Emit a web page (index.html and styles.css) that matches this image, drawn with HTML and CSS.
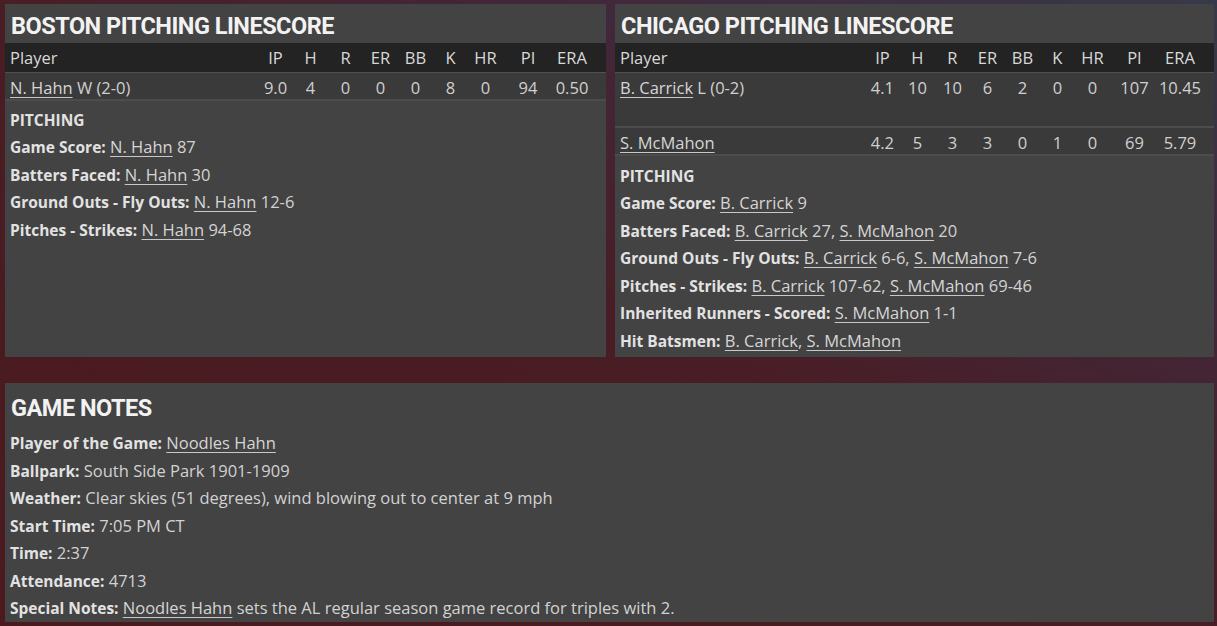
FILE: index.html
```html
<!DOCTYPE html>
<html>
<head>
<meta charset="utf-8">
<link rel="stylesheet" href="styles.css">
</head>
<body>
<div class="page">
  <div class="top-row">
    <section class="panel">
      <h2 class="panel-title">BOSTON PITCHING LINESCORE</h2>
      <table class="linescore">
        <thead>
          <tr><th class="player">Player</th><th>IP</th><th>H</th><th>R</th><th>ER</th><th>BB</th><th>K</th><th>HR</th><th class="pi">PI</th><th class="era">ERA</th></tr>
        </thead>
        <tbody>
          <tr><td class="player"><a>N. Hahn</a> W (2-0)</td><td>9.0</td><td>4</td><td>0</td><td>0</td><td>0</td><td>8</td><td>0</td><td>94</td><td>0.50</td></tr>
        </tbody>
      </table>
      <div class="facts">
        <div class="facts-head">PITCHING</div>
        <p><b>Game Score:</b> <a>N. Hahn</a> 87</p>
        <p><b>Batters Faced:</b> <a>N. Hahn</a> 30</p>
        <p><b>Ground Outs - Fly Outs:</b> <a>N. Hahn</a> 12-6</p>
        <p><b>Pitches - Strikes:</b> <a>N. Hahn</a> 94-68</p>
      </div>
    </section>
    <section class="panel chicago">
      <h2 class="panel-title">CHICAGO PITCHING LINESCORE</h2>
      <table class="linescore">
        <thead>
          <tr><th class="player">Player</th><th>IP</th><th>H</th><th>R</th><th>ER</th><th>BB</th><th>K</th><th>HR</th><th class="pi">PI</th><th class="era">ERA</th></tr>
        </thead>
        <tbody>
          <tr class="tall"><td class="player"><a>B. Carrick</a> L (0-2)</td><td>4.1</td><td>10</td><td>10</td><td>6</td><td>2</td><td>0</td><td>0</td><td>107</td><td>10.45</td></tr>
          <tr><td class="player"><a>S. McMahon</a></td><td>4.2</td><td>5</td><td>3</td><td>3</td><td>0</td><td>1</td><td>0</td><td>69</td><td>5.79</td></tr>
        </tbody>
      </table>
      <div class="facts">
        <div class="facts-head">PITCHING</div>
        <p><b>Game Score:</b> <a>B. Carrick</a> 9</p>
        <p><b>Batters Faced:</b> <a>B. Carrick</a> 27, <a>S. McMahon</a> 20</p>
        <p><b>Ground Outs - Fly Outs:</b> <a>B. Carrick</a> 6-6, <a>S. McMahon</a> 7-6</p>
        <p><b>Pitches - Strikes:</b> <a>B. Carrick</a> 107-62, <a>S. McMahon</a> 69-46</p>
        <p><b>Inherited Runners - Scored:</b> <a>S. McMahon</a> 1-1</p>
        <p><b>Hit Batsmen:</b> <a>B. Carrick</a>, <a>S. McMahon</a></p>
      </div>
    </section>
  </div>
  <section class="panel game-notes">
    <h2 class="panel-title">GAME NOTES</h2>
    <div class="facts notes">
      <p><b>Player of the Game:</b> <a>Noodles Hahn</a></p>
      <p><b>Ballpark:</b> South Side Park 1901-1909</p>
      <p><b>Weather:</b> Clear skies (51 degrees), wind blowing out to center at 9 mph</p>
      <p><b>Start Time:</b> 7:05 PM CT</p>
      <p><b>Time:</b> 2:37</p>
      <p><b>Attendance:</b> 4713</p>
      <p><b>Special Notes:</b> <a>Noodles Hahn</a> sets the AL regular season game record for triples with 2.</p>
    </div>
  </section>
</div>
</body>
</html>
```

FILE: styles.css
```css
* { box-sizing: border-box; }
html, body { margin: 0; padding: 0; }
body {
  width: 1217px;
  height: 626px;
  overflow: hidden;
  font-family: "Open Sans", "Liberation Sans", sans-serif;
  color: #d2d2d2;
  background:
    linear-gradient(205deg, #37394a 0%, #41283a 25%, #491d25 50%, #4a1a1e 100%);
}
.page {
  padding: 4px 3px 0 5px;
  display: flex;
  flex-direction: column;
  gap: 26px;
}
.top-row {
  display: grid;
  grid-template-columns: 601px 599px;
  grid-template-rows: 353px;
  gap: 9px;
  height: 353px;
}
.panel {
  background: #434343;
  overflow: hidden;
}
.panel-title {
  margin: 0;
  height: 39px;
  padding: 8px 0 0 6px;
  font-family: Roboto, "Liberation Sans", sans-serif;
  font-size: 23.5px;
  font-weight: 700;
  color: #f2f2f2;
  line-height: 28px;
  letter-spacing: -0.5px;
}
.linescore {
  width: 100%;
  border-collapse: collapse;
  font-size: 16.5px;
}
.linescore th {
  background: #232323;
  font-weight: 400;
  color: #d8d8d8;
  height: 29px;
  text-align: center;
  width: 35px;
  padding: 1px 0 0;
  border-bottom: 1px solid #505050;
}
.linescore td {
  background: #3a3a3a;
  height: 28px;
  text-align: center;
  padding: 3px 0 0;
  color: #d0d0d0;
  border-bottom: 2px solid #4c4c4c;
}
.linescore tr.tall td { height: 55px; vertical-align: top; padding-top: 3px; }
.linescore .player { text-align: left; padding-left: 5px; width: auto; }
.linescore .pi { width: 50px; }
.linescore .era { width: 53px; padding-right: 15px; }
.linescore tr td:last-child { padding-right: 15px; }
.chicago .linescore .pi { width: 49px; }
.chicago .linescore .era { width: 53px; padding-right: 13px; }
.chicago .linescore tr td:last-child { padding-right: 13px; }
a {
  color: #d6d6d6;
  text-decoration: underline;
  text-decoration-color: #c8c8c8;
  text-underline-offset: 3px;
  line-height: 1;
}
.facts {
  padding: 6px 0 0 5px;
  font-size: 16.5px;
  line-height: 27.5px;
}
.chicago .facts { padding-top: 7px; }
.facts-head { font-weight: 700; color: #e2e2e2; font-size: 15.5px; height: 26px; }
.facts p { margin: 0; height: 27.5px; white-space: nowrap; }
.facts b { font-weight: 700; color: #e2e2e2; font-size: 15.5px; line-height: 1; }
.game-notes { height: 239px; }
.game-notes .panel-title { height: 41px; padding-top: 11px; }
.notes { padding-top: 5px; }
```
